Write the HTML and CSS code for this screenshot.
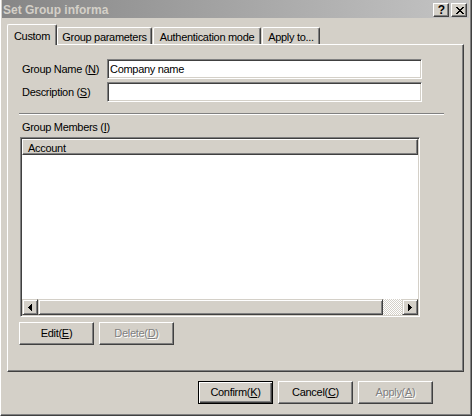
FILE: index.html
```html
<!DOCTYPE html>
<html>
<head>
<meta charset="utf-8">
<title>Set Group information</title>
<link rel="stylesheet" href="styles.css">
</head>
<body>
<div class="window">
  <div class="titlebar">
    <span class="title">Set Group informa</span>
    <div class="title-buttons">
      <span class="tbtn help">?</span>
      <span class="tbtn close"><svg width="8" height="7" viewBox="0 0 8 7" shape-rendering="crispEdges"><path fill="#000" d="M0 0h2v1H0z M6 0h2v1H6z M1 1h2v1H1z M5 1h2v1H5z M2 2h4v1H2z M3 3h2v1H3z M2 4h4v1H2z M1 5h2v1H1z M5 5h2v1H5z M0 6h2v1H0z M6 6h2v1H6z"/></svg></span>
    </div>
  </div>
  <div class="content">
    <div class="tabs">
      <div class="tab selected tab-custom">Custom</div>
      <div class="tab tab-gp">Group parameters</div>
      <div class="tab tab-am">Authentication mode</div>
      <div class="tab tab-at">Apply to...</div>
    </div>
    <div class="panel">
      <div class="field-row">
        <label class="field-label">Group Name (<u>N</u>)</label>
        <input class="field-input" type="text" value="Company name">
      </div>
      <div class="field-row">
        <label class="field-label">Description (<u>S</u>)</label>
        <input class="field-input" type="text" value="">
      </div>
      <div class="separator"></div>
      <div class="group-label">Group Members (<u>I</u>)</div>
      <div class="listview">
        <div class="lv-header"><span>Account</span></div>
        <div class="lv-body"></div>
        <div class="hscroll">
          <div class="sb-btn"><svg width="4" height="7" viewBox="0 0 4 7" shape-rendering="crispEdges"><path fill="#000" d="M3 0h1v7H3z M2 1h1v5H2z M1 2h1v3H1z M0 3h1v1H0z"/></svg></div>
          <div class="sb-thumb"></div>
          <div class="sb-track"></div>
          <div class="sb-btn"><svg width="4" height="7" viewBox="0 0 4 7" shape-rendering="crispEdges"><path fill="#000" d="M0 0h1v7H0z M1 1h1v5H1z M2 2h1v3H2z M3 3h1v1H3z"/></svg></div>
        </div>
      </div>
      <div class="list-buttons">
        <button class="btn">Edit(<u>E</u>)</button>
        <button class="btn disabled">Delete(<u>D</u>)</button>
      </div>
    </div>
    <div class="dialog-buttons">
      <button class="btn default">Confirm(<u>K</u>)</button>
      <button class="btn">Cancel(<u>C</u>)</button>
      <button class="btn disabled">Apply(<u>A</u>)</button>
    </div>
  </div>
</div>
</body>
</html>
```

FILE: styles.css
```css
* { box-sizing: border-box; }
html, body { margin: 0; padding: 0; }
body {
  width: 472px;
  height: 416px;
  overflow: hidden;
  background: #d4d0c8;
  font-family: "Liberation Sans", Arial, sans-serif;
  font-size: 11px;
  color: #000;
}
u { text-decoration: underline; text-underline-offset: 1px; }

.window {
  width: 472px;
  height: 416px;
  background: #d4d0c8;
  border-left: 1px solid #ffffff;
  border-right: 1px solid #404040;
  border-bottom: 1px solid #404040;
  box-shadow: inset -1px -1px #808080;
  padding: 0 2px 0 1px;
}

/* title bar */
.titlebar {
  height: 18px;
  display: flex;
  justify-content: space-between;
  background: linear-gradient(to right, #868686, #c4c4c4);
  padding: 0 2px 0 1px;
}
.title {
  font-weight: bold;
  font-size: 12px;
  line-height: 15px;
  padding-top: 3px;
  color: #d4d0c8;
  white-space: nowrap;
}
.title-buttons {
  display: flex;
  gap: 2px;
  padding-top: 3px;
}
.tbtn {
  width: 16px;
  height: 14px;
  background: #d4d0c8;
  border: 1px solid;
  border-color: #ffffff #404040 #404040 #ffffff;
  box-shadow: inset -1px -1px #808080;
  display: flex;
  align-items: center;
  justify-content: center;
}
.help {
  font-weight: bold;
  font-size: 12px;
  line-height: 12px;
  padding-left: 1px;
}
.close svg { display: block; margin-left: 1px; }

/* content */
.content { padding: 0 5px; }

.tabs {
  display: flex;
  align-items: flex-end;
  height: 20px;
  margin-top: 6px;
}
.tab {
  height: 17px;
  border-top: 1px solid #ffffff;
  border-left: 1px solid #ffffff;
  border-right: 1px solid #404040;
  box-shadow: inset -1px 0 #808080;
  border-radius: 2px 2px 0 0;
  background: #d4d0c8;
  line-height: 13px;
  padding-top: 3px;
  text-align: center;
  white-space: nowrap;
  letter-spacing: -0.3px;
}
.tab.selected {
  height: 21px;
  padding-top: 5px;
  margin-bottom: -1px;
  position: relative;
  z-index: 1;
}
.tab-custom { width: 50px; }
.tab-gp { width: 95px; }
.tab-am { width: 108px; margin-left: 1px; }
.tab-at { width: 58px; margin-left: 1px; }

.panel {
  width: 457px;
  height: 328px;
  border-top: 1px solid #ffffff;
  border-left: 1px solid #ffffff;
  border-right: 1px solid #404040;
  border-bottom: 1px solid #404040;
  box-shadow: inset -1px -1px #808080;
  padding: 14px 0 0 11px;
}

.field-row {
  display: flex;
  height: 20px;
}
.field-row + .field-row { margin-top: 3px; }
.field-label {
  width: 88px;
  padding-left: 3px;
  padding-top: 4px;
  line-height: 13px;
  letter-spacing: -0.3px;
  white-space: nowrap;
}
.field-input {
  width: 315px;
  height: 20px;
  margin: 0;
  border: 1px solid;
  border-color: #808080 #ffffff #ffffff #808080;
  box-shadow: inset 1px 1px #404040, inset -1px -1px #d4d0c8;
  background: #ffffff;
  padding: 0 0 0 2px;
  font-family: "Liberation Sans", Arial, sans-serif;
  font-size: 11px;
  letter-spacing: -0.3px;
  color: #000;
  outline: none;
}

.separator {
  width: 425px;
  height: 2px;
  border-top: 1px solid #808080;
  border-bottom: 1px solid #ffffff;
  margin-top: 11px;
}
.group-label {
  margin-top: 6px;
  padding-left: 3px;
  line-height: 13px;
  letter-spacing: -0.3px;
}

.listview {
  width: 400px;
  height: 180px;
  margin: 3px 0 0 1px;
  border: 1px solid;
  border-color: #808080 #ffffff #ffffff #808080;
  box-shadow: inset 1px 1px #404040, inset -1px -1px #d4d0c8;
  padding: 1px;
  background: #ffffff;
  display: flex;
  flex-direction: column;
}
.lv-header {
  height: 16px;
  flex: none;
  background: #d4d0c8;
  border-top: 1px solid #ffffff;
  border-left: 1px solid #ffffff;
  border-right: 1px solid #404040;
  border-bottom: 1px solid #404040;
  box-shadow: inset -1px -1px #808080;
  padding: 1px 0 0 5px;
  line-height: 14px;
  letter-spacing: -0.3px;
}
.lv-body { flex: 1; background: #ffffff; }
.hscroll {
  height: 16px;
  flex: none;
  display: flex;
}
.sb-btn, .sb-thumb {
  background: #d4d0c8;
  border: 1px solid;
  border-color: #d4d0c8 #404040 #404040 #d4d0c8;
  box-shadow: inset 1px 1px #ffffff, inset -1px -1px #808080;
}
.sb-btn {
  width: 16px;
  display: flex;
  align-items: center;
  justify-content: center;
}
.sb-btn svg { display: block; }
.sb-thumb { width: 345px; }
.sb-track {
  flex: 1;
  background: repeating-conic-gradient(#ffffff 0 25%, #d4d0c8 0 50%) 0 0 / 2px 2px;
}

.list-buttons {
  display: flex;
  gap: 5px;
  margin-top: 5px;
}

.btn {
  width: 75px;
  height: 23px;
  margin: 0;
  padding: 0;
  background: #d4d0c8;
  border: 1px solid;
  border-color: #ffffff #404040 #404040 #ffffff;
  box-shadow: inset -1px -1px #808080;
  font-family: "Liberation Sans", Arial, sans-serif;
  font-size: 11px;
  letter-spacing: -0.3px;
  line-height: 21px;
  color: #000;
  text-align: center;
}
.btn.default {
  border-color: #000000;
  box-shadow: inset 1px 1px #ffffff, inset -1px -1px #404040, inset -2px -2px #808080;
}
.btn.disabled {
  color: #808080;
  text-shadow: 1px 1px #ffffff;
}

.dialog-buttons {
  display: flex;
  justify-content: flex-end;
  gap: 5px;
  margin-top: 9px;
  padding-right: 31px;
}
```
